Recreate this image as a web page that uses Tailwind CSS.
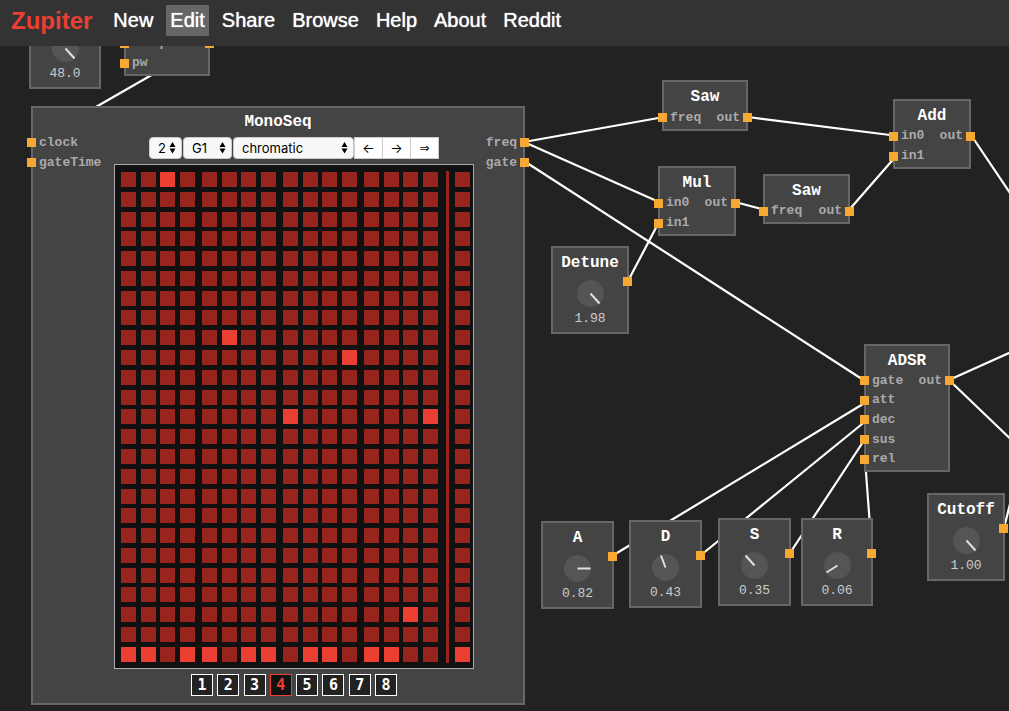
<!DOCTYPE html>
<html lang="en">
<head>
<meta charset="utf-8">
<meta name="viewport" content="width=device-width, initial-scale=1">
<title>Zupiter</title>
<script src="https://cdn.jsdelivr.net/npm/@tailwindcss/browser@4"></script>
</head>
<body class="relative min-h-screen overflow-hidden bg-[#222] font-['Liberation_Mono',monospace] text-white">
<header class="relative z-10 flex h-[46px] items-start bg-[#333] pt-[5px] pl-[11px] font-['Liberation_Sans',sans-serif]">
  <a href="#" class="mr-[17px] text-[24px] leading-[31px] font-bold text-[#eb3f33]">Zupiter</a>
  <nav class="flex gap-[9px] text-[20px] leading-[31px] [text-shadow:0_0_1px_#fff]">
    <a href="#" class="px-1">New</a>
    <a href="#" class="bg-[#666] px-1" aria-current="page">Edit</a>
    <a href="#" class="px-1">Share</a>
    <a href="#" class="px-1">Browse</a>
    <a href="#" class="px-1">Help</a>
    <a href="#" class="px-1">About</a>
    <a href="#" class="px-1">Reddit</a>
  </nav>
</header>

<main id="canvas" class="absolute inset-0 overflow-hidden">
  <svg class="absolute inset-0 h-full w-full" stroke="#fff" stroke-width="2.2" aria-hidden="true">
    <path fill="none" d="M209 42L35 142M524 142L664 117M524 142L659 202M524 161L865 381M748 117L898 136M735 202L765 210M628 281L659 222M849 210L897 155M971 135L1045 245M949 380L1069 326M949 380L1069 495M612 556L868 401M701 555L867 420M790 553L865 439M872 553L865 459M1004 528L1014 488"/>
  </svg>

  <section class="absolute top-[106px] left-[31px] flex h-[599px] w-[494px] flex-col border-2 border-[#666] bg-[#444]">
    <h2 class="pt-[4px] text-center text-[16px] leading-[20px] font-bold">MonoSeq</h2>
    <div class="-mx-[6px] flex justify-between">
      <ul class="mt-px flex h-[39px] w-[87px] flex-col text-[13px] font-bold text-[#aaa]">
        <li class="flex flex-1 items-center gap-[3px]"><i class="size-[9px] bg-[#f6a832]"></i>clock</li>
        <li class="flex flex-1 items-center gap-[3px]"><i class="size-[9px] bg-[#f6a832]"></i>gateTime</li>
      </ul>
      <div class="flex w-[360px] flex-col">
        <div class="mt-[5px] flex items-start justify-center text-[13px] leading-[20px] text-black font-['Inter',sans-serif]">
          <label class="relative mr-px"><select aria-label="Octaves" class="h-[22px] w-[33px] appearance-none rounded-[4px] border border-[#ccc] bg-[#f8f8f8] pl-2"><option>2</option></select><svg class="pointer-events-none absolute top-[5px] right-[6px]" width="7" height="12"><path d="M3.500 0L6.500 5H.5ZM3.500 11.500L6.500 6.500H.5Z"/></svg></label>
          <label class="relative mr-px"><select aria-label="Root note" class="h-[22px] w-[49px] appearance-none rounded-[4px] border border-[#ccc] bg-[#f8f8f8] pl-2"><option>G1</option></select><svg class="pointer-events-none absolute top-[5px] right-[6px]" width="7" height="12"><path d="M3.500 0L6.500 5H.5ZM3.500 11.500L6.500 6.500H.5Z"/></svg></label>
          <label class="relative"><select aria-label="Scale" class="h-[22px] w-[121px] appearance-none rounded-[4px] border border-[#ccc] bg-[#f8f8f8] pl-2"><option>chromatic</option></select><svg class="pointer-events-none absolute top-[5px] right-[6px]" width="7" height="12"><path d="M3.500 0L6.500 5H.5ZM3.500 11.500L6.500 6.500H.5Z"/></svg></label>
          <button class="h-[22px] w-[29px] border border-[#ccc] bg-white" aria-label="Shift left">←</button>
          <button class="-ml-px h-[22px] w-[29px] border border-[#ccc] bg-white" aria-label="Shift right">→</button>
          <button class="-ml-px h-[22px] w-[29px] border border-[#ccc] bg-white font-['DejaVu_Sans',sans-serif] text-[12px]" aria-label="Extend">⇒</button>
        </div>
        <div id="grid" class="mt-[5px] flex h-[505px] border border-[#aaa] bg-[#111] pt-[6px] pb-[5px] pl-[6px]"></div>
        <div id="patterns" class="mx-auto mt-[5px] flex w-[206px] justify-between font-['DejaVu_Sans_Mono',monospace] text-[15px] leading-[20px] font-bold"></div>
      </div>
      <ul class="mt-px flex h-[39px] w-[55px] flex-col text-[13px] font-bold text-[#aaa]">
        <li class="flex flex-1 items-center justify-end gap-[3px]">freq<i class="size-[9px] bg-[#f6a832]"></i></li>
        <li class="flex flex-1 items-center justify-end gap-[3px]">gate<i class="size-[9px] bg-[#f6a832]"></i></li>
      </ul>
    </div>
  </section>
</main>

<script>
const canvas = document.getElementById('canvas');
const port = '<i class="size-[9px] bg-[#f6a832]"></i>';

// Nodes with named inputs and one output: title, x, y, width, height, inputs
[
  ['', 124, 6, 86, 70, ['freq', 'pw']],
  ['Saw', 662, 80, 86, 51, ['freq']],
  ['Mul', 658, 166, 78, 70, ['in0', 'in1']],
  ['Saw', 763, 174, 87, 50, ['freq']],
  ['Add', 893, 99, 78, 70, ['in0', 'in1']],
  ['ADSR', 864, 344, 86, 128, ['gate', 'att', 'dec', 'sus', 'rel']],
].forEach(([title, x, y, w, h, inputs]) => {
  const rows = inputs.map((name, i) => `<li class="flex flex-1 items-center gap-[3px]">${port}${name}${i ? '' : `<span class="ml-auto">out</span>${port}`}</li>`).join('');
  canvas.insertAdjacentHTML('beforeend', `<section class="absolute flex flex-col border-2 border-[#666] bg-[#444] pb-px" style="left:${x}px;top:${y}px;width:${w}px;height:${h}px">
    <h2 class="h-[25px] pt-[5px] text-center text-[16px] leading-[20px] font-bold">${title}</h2>
    <ul class="-mx-[6px] flex flex-1 flex-col text-[13px] leading-[16px] font-bold text-[#aaa]">${rows}</ul></section>`);
});

// Knob nodes: title, x, y, width, value, pointer tip relative to the knob centre
[
  ['', 29, 1, 72, '48.0', 9, 10],
  ['Detune', 551, 246, 78, '1.98', 9, 10],
  ['A', 541, 521, 73, '0.82', 13, 0],
  ['D', 629, 520, 73, '0.43', -4.5, -12],
  ['S', 718, 518, 73, '0.35', -9, -10],
  ['R', 801, 518, 72, '0.06', -11, 7],
  ['Cutoff', 927, 493, 78, '1.00', 9, 10],
].forEach(([title, x, y, w, value, dx, dy]) => {
  canvas.insertAdjacentHTML('beforeend', `<section class="absolute flex h-[88px] flex-col items-center border-2 border-[#666] bg-[#444]" style="left:${x}px;top:${y}px;width:${w}px">
    <h2 class="h-[25px] pt-[5px] text-[16px] leading-[20px] font-bold">${title}</h2>
    <svg class="mt-[7px] size-[27px]" viewBox="0 0 27 27" role="img" aria-label="Knob"><circle cx="13.500" cy="13.500" r="13.500" fill="#555"/><path d="M13.500 13.500l${dx} ${dy}" stroke="#e0e0e0" stroke-width="2"/></svg>
    <output class="mt-[4px] text-[13px] leading-[16px] text-[#ccc]">${value}</output>
    ${y > 40 ? '<i class="absolute top-[29px] -right-[5px] size-[9px] bg-[#f6a832]"></i>' : ''}</section>`);
});

// Step grid: 16 steps in groups of four, then the next bar's first step
const lit = { 0: [24], 1: [24], 2: [0], 3: [24], 4: [24], 5: [8], 6: [24], 7: [24], 8: [12], 9: [24], 10: [24], 11: [9], 12: [24], 13: [24], 14: [22], 15: [12], 16: [24] };
const column = c => `<div class="flex flex-col justify-between py-px">${Array.from({ length: 25 }, (_, r) => {
  const on = lit[c].includes(r);
  return `<button class="size-[15px] ${on ? 'bg-[#eb3f33]' : 'bg-[#98241e]'}" aria-label="Step ${c + 1}, note ${25 - r}" aria-pressed="${on}"></button>`;
}).join('')}</div>`;
document.getElementById('grid').innerHTML =
  `<div class="flex gap-[7px]">${[0, 4, 8, 12].map(g => `<div class="flex w-[74px] justify-between">${[0, 1, 2, 3].map(i => column(g + i)).join('')}</div>`).join('')}</div>
   <div class="mr-[6px] ml-2 w-[3px] shrink-0 bg-[#98241e]"></div>${column(16)}`;

document.getElementById('patterns').innerHTML = [1, 2, 3, 4, 5, 6, 7, 8].map(n =>
  `<button class="size-[22px] border ${n === 4 ? 'border-[#eb3f33] bg-[#111] text-[#eb3f33]' : 'border-white bg-[#222]'}">${n}</button>`).join('');
</script>
</body>
</html>
